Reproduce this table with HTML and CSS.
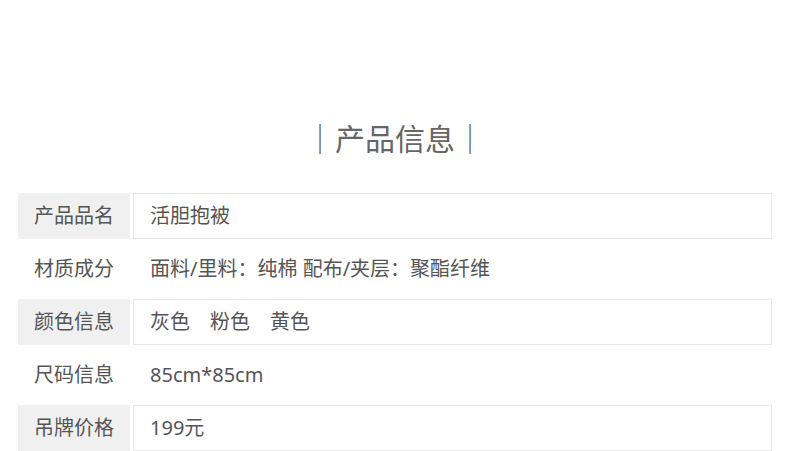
FILE: index.html
```html
<!DOCTYPE html>
<html lang="zh-CN">
<head>
  <meta charset="UTF-8">
  <meta name="viewport" content="width=device-width, initial-scale=1.0">
  <title>产品信息</title>
  <link rel="stylesheet" href="styles.css">
</head>
<body>
  <div class="info-section">
    <h2 class="info-title">｜产品信息｜</h2>

    <div class="info-table">
      <div class="info-row shaded">
        <div class="info-label">产品品名</div>
        <div class="info-value">活胆抱被</div>
      </div>
      <div class="info-row">
        <div class="info-label">材质成分</div>
        <div class="info-value">面料/里料：纯棉 配布/夹层：聚酯纤维</div>
      </div>
      <div class="info-row shaded">
        <div class="info-label">颜色信息</div>
        <div class="info-value">灰色&emsp;粉色&emsp;黄色</div>
      </div>
      <div class="info-row">
        <div class="info-label">尺码信息</div>
        <div class="info-value">85cm*85cm</div>
      </div>
      <div class="info-row shaded">
        <div class="info-label">吊牌价格</div>
        <div class="info-value">199元</div>
      </div>
    </div>
  </div>
</body>
</html>
```

FILE: styles.css
```css
body {
  margin: 0;
  padding: 0;
  background-color: #fff;
  color: #555;
  font-family: "Noto Sans", "Noto Sans CJK SC", sans-serif;
}
.info-section {
  padding: 119px 18px 0;
}
.info-title {
  margin: 0 0 34px;
  font-size: 30px;
  font-weight: normal;
  line-height: 40px;
  text-align: center;
  color: #666;
}
.info-table {
  display: flex;
  flex-direction: column;
  gap: 7px;
}
.info-row {
  display: flex;
  gap: 3px;
  height: 46px;
}
.info-label {
  width: 112px;
  font-size: 20px;
  line-height: 46px;
  text-align: center;
}
.info-value {
  flex: 1;
  padding-left: 16px;
  font-size: 20px;
  line-height: 44px;
  border: 1px solid transparent;
}
.info-row.shaded .info-label {
  background-color: #f0f0f0;
}
.info-row.shaded .info-value {
  border-color: #e8e8e8;
}
```
